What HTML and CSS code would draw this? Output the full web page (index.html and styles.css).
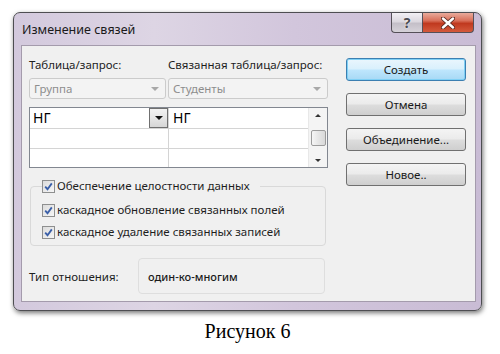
FILE: index.html
```html
<!DOCTYPE html>
<html lang="ru">
<head>
<meta charset="utf-8">
<link rel="stylesheet" href="styles.css">
</head>
<body>
<div class="stage">
  <div class="window">
    <div class="titlebar">
      <span class="title">Изменение связей</span>
      <div class="caption-btns">
        <div class="cbtn help">?</div>
        <div class="cbtn close">
          <svg width="14" height="12" viewBox="0 0 14 12"><path d="M2 1.5 L12 10.5 M12 1.5 L2 10.5" stroke="#5a2a22" stroke-width="4.2" stroke-linecap="round"/><path d="M2 1.5 L12 10.5 M12 1.5 L2 10.5" stroke="#ffffff" stroke-width="2.4" stroke-linecap="round"/></svg>
        </div>
      </div>
    </div>
    <div class="panel">
      <div class="left">
        <div class="labels">
          <span class="lab-a">Таблица/запрос:</span>
          <span class="lab-b">Связанная таблица/запрос:</span>
        </div>
        <div class="combos">
          <div class="combo combo-a"><span>Группа</span><span class="carr"></span></div>
          <div class="combo combo-b"><span>Студенты</span><span class="carr"></span></div>
        </div>
        <div class="grid">
          <div class="cells">
            <div class="row">
              <div class="cell ca">НГ<span class="ddbtn"><span class="tri"></span></span></div>
              <div class="cell cb">НГ</div>
            </div>
            <div class="row">
              <div class="cell ca"></div>
              <div class="cell cb"></div>
            </div>
            <div class="row last">
              <div class="cell ca"></div>
              <div class="cell cb"></div>
            </div>
          </div>
          <div class="scroll">
            <span class="sarr up"></span>
            <span class="thumb"></span>
            <span class="sarr down"></span>
          </div>
        </div>
        <fieldset class="group">
          <legend class="chk"><span class="box"><svg width="9" height="9" viewBox="0 0 9 9"><path d="M1.2 4.6 L3.5 7.2 L7.8 1.4" fill="none" stroke="#3a5fa8" stroke-width="1.8"/></svg></span>Обеспечение целостности данных</legend>
          <div class="chk"><span class="box"><svg width="9" height="9" viewBox="0 0 9 9"><path d="M1.2 4.6 L3.5 7.2 L7.8 1.4" fill="none" stroke="#3a5fa8" stroke-width="1.8"/></svg></span>каскадное обновление связанных полей</div>
          <div class="chk"><span class="box"><svg width="9" height="9" viewBox="0 0 9 9"><path d="M1.2 4.6 L3.5 7.2 L7.8 1.4" fill="none" stroke="#3a5fa8" stroke-width="1.8"/></svg></span>каскадное удаление связанных записей</div>
        </fieldset>
        <div class="type">
          <span class="type-label">Тип отношения:</span>
          <div class="type-box">один-ко-многим</div>
        </div>
      </div>
      <div class="buttons">
        <div class="btn default">Создать</div>
        <div class="btn">Отмена</div>
        <div class="btn">Объединение...</div>
        <div class="btn">Новое..</div>
      </div>
    </div>
  </div>
  <div class="caption">Рисунок 6</div>
</div>
</body>
</html>
```
FILE: styles.css
```css
html, body {
  margin: 0;
  padding: 0;
  background: #ffffff;
}
.stage {
  width: 500px;
  height: 354px;
  padding: 12px 0 0 13px;
  box-sizing: border-box;
  font-family: "Noto Sans", "Open Sans", sans-serif;
}
.window {
  width: 469px;
  height: 299px;
  box-sizing: border-box;
  border: 1px solid #4e4e52;
  border-radius: 7px;
  background: linear-gradient(to right, #d3c9dd 0%, #ddd5e4 30%, #d2c6dc 60%, #c9bcd5 100%);
  box-shadow: 1px 2px 5px rgba(0,0,0,0.55);
  padding: 0 5px 8px 7px;
  display: flex;
  flex-direction: column;
}
.titlebar {
  height: 32px;
  display: flex;
  justify-content: space-between;
  align-items: flex-start;
}
.title {
  font-size: 12.5px;
  color: #1a1a1a;
  padding: 9px 0 0 1px;
  line-height: 16px;
}
.caption-btns {
  display: flex;
  margin-right: 2px;
}
.cbtn {
  height: 20px;
  box-sizing: border-box;
  border: 1px solid #555058;
  border-top: none;
  display: flex;
  align-items: center;
  justify-content: center;
}
.help {
  width: 31px;
  border-radius: 0 0 0 4px;
  border-right: none;
  background: linear-gradient(to bottom, #f2f0f4 0%, #dcd8df 45%, #c4bfc8 55%, #d6d2d9 100%);
  color: #4a4a50;
  font-size: 14px;
  font-weight: bold;
  line-height: 18px;
  text-shadow: 0 0 2px #ffffff;
}
.close {
  width: 52px;
  border-radius: 0 0 4px 0;
  background: linear-gradient(to bottom, #e9ab9c 0%, #d9705a 40%, #c0391f 55%, #d45a3c 100%);
}
.panel {
  height: 257px;
  box-sizing: border-box;
  border: 1px solid #a49bac;
  background: #f0f0f0;
  display: flex;
  padding-left: 7px;
  font-size: 11.5px;
  color: #1e1e1e;
}
.left {
  width: 299px;
  display: flex;
  flex-direction: column;
}
.labels {
  margin-top: 11px;
  height: 16px;
  line-height: 16px;
  display: flex;
  white-space: nowrap;
}
.lab-a { width: 139px; flex: none; }
.combos {
  margin-top: 5px;
  display: flex;
  gap: 2px;
}
.combo {
  height: 21px;
  box-sizing: border-box;
  border: 1px solid #cbcbcb;
  border-radius: 3px;
  background: #f3f3f3;
  color: #8e8e8e;
  display: flex;
  align-items: center;
  justify-content: space-between;
  padding: 0 6px 0 4px;
  font-size: 11.5px;
}
.combo-a { width: 137px; }
.combo-b { width: 160px; }
.carr {
  width: 0;
  height: 0;
  border-left: 4px solid transparent;
  border-right: 4px solid transparent;
  border-top: 4px solid #a8a8a8;
}
.grid {
  margin-top: 8px;
  height: 61px;
  box-sizing: border-box;
  border: 1px solid #828790;
  background: #ffffff;
  display: flex;
}
.cells {
  flex: 1;
  display: flex;
  flex-direction: column;
}
.row {
  height: 20px;
  display: flex;
  border-bottom: 1px solid #d4d4d4;
}
.row.last { border-bottom: none; height: 19px; }
.cell {
  box-sizing: border-box;
  font-size: 14px;
  line-height: 20px;
  color: #000;
  padding-left: 3px;
  display: flex;
  align-items: center;
}
.ca {
  width: 139px;
  border-right: 1px solid #d4d4d4;
  justify-content: space-between;
  padding-right: 0;
}
.cb { flex: 1; padding-left: 4px; }
.ddbtn {
  width: 19px;
  height: 20px;
  box-sizing: border-box;
  border: 1px solid #707070;
  background: linear-gradient(to bottom, #f2f2f2 0%, #e6e6e6 50%, #d6d6d6 100%);
  display: flex;
  align-items: center;
  justify-content: center;
}
.tri {
  width: 0;
  height: 0;
  border-left: 4px solid transparent;
  border-right: 4px solid transparent;
  border-top: 4px solid #111;
}
.scroll {
  width: 19px;
  background: #f4f4f4;
  border-left: 1px solid #e8e8e8;
  display: flex;
  flex-direction: column;
  align-items: center;
  justify-content: space-between;
  padding: 6px 0 5px;
  box-sizing: border-box;
}
.sarr {
  width: 0;
  height: 0;
  border-left: 3px solid transparent;
  border-right: 3px solid transparent;
}
.sarr.up { border-bottom: 3px solid #333; }
.sarr.down { border-top: 3px solid #333; }
.thumb {
  width: 15px;
  height: 16px;
  box-sizing: border-box;
  border: 1px solid #9c9c9c;
  border-radius: 2px;
  background: linear-gradient(to right, #f6f6f6 0%, #e6e6e6 50%, #d9d9d9 100%);
}
.group {
  margin: 10px 2px 0 1px;
  padding: 2px 0 2px 11px;
  border: 1px solid #d9d9d9;
  border-radius: 4px;
  min-width: 0;
}
.group legend {
  padding: 0 10px 0 0;
  margin-left: 0;
}
.chk {
  display: flex;
  align-items: center;
  height: 22px;
  font-size: 11.5px;
  line-height: 16px;
  color: #1e1e1e;
  white-space: nowrap;
}
legend.chk { height: 16px; }
.group div.chk:first-of-type { margin-top: 3px; }
.box {
  width: 13px;
  height: 13px;
  box-sizing: border-box;
  border: 1px solid #8e8f8f;
  background: linear-gradient(135deg, #dcdcdc 0%, #f6f6f6 100%);
  display: flex;
  align-items: center;
  justify-content: center;
  margin-right: 2px;
  flex: none;
}
.type {
  margin-top: 12px;
  display: flex;
  align-items: center;
}
.type-label {
  width: 109px;
  flex: none;
  font-size: 11.5px;
}
.type-box {
  width: 187px;
  height: 36px;
  box-sizing: border-box;
  border: 1px solid #dedede;
  border-radius: 4px;
  background: #f0f0f0;
  padding: 0 0 0 9px;
  display: flex;
  align-items: center;
  font-size: 11px;
  font-weight: 500;
  color: #1a1a1a;
}
.buttons {
  margin-left: 18px;
  padding-top: 12px;
  display: flex;
  flex-direction: column;
  gap: 12px;
}
.btn {
  width: 120px;
  height: 23px;
  box-sizing: border-box;
  border: 1px solid #707070;
  border-radius: 3px;
  background: linear-gradient(to bottom, #f4f4f4 0%, #ebebeb 48%, #dddddd 52%, #cfcfcf 100%);
  display: flex;
  align-items: center;
  justify-content: center;
  font-size: 11.5px;
  color: #1a1a1a;
}
.btn.default {
  border-color: #3c7fb1;
  background: linear-gradient(to bottom, #eaf6fd 0%, #d9f0fc 48%, #bee6fd 52%, #a7d9f5 100%);
  box-shadow: inset 0 0 0 1px #7fd0f5;
}
.caption {
  width: 469px;
  margin-top: 8px;
  text-align: center;
  font-family: "Liberation Serif", "Times New Roman", serif;
  font-size: 20px;
  line-height: 24px;
  color: #000;
}
```
